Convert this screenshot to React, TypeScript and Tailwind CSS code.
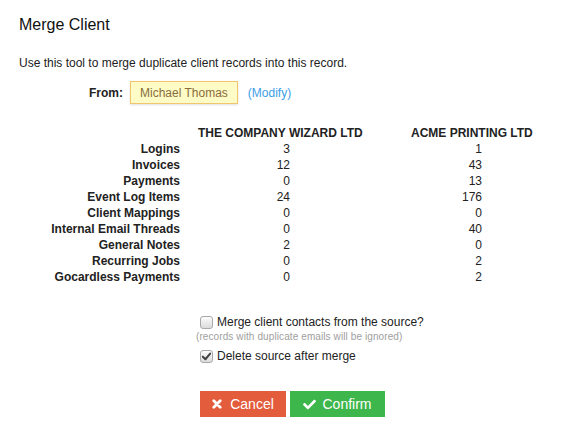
import React from "react";
import { FaCheck } from "react-icons/fa";

const rows: [string, string, string][] = [
  ["Logins", "3", "1"],
  ["Invoices", "12", "43"],
  ["Payments", "0", "13"],
  ["Event Log Items", "24", "176"],
  ["Client Mappings", "0", "0"],
  ["Internal Email Threads", "0", "40"],
  ["General Notes", "2", "0"],
  ["Recurring Jobs", "0", "2"],
  ["Gocardless Payments", "0", "2"],
];

function Box({ checked }: { checked?: boolean }) {
  return (
    <span className="relative inline-flex w-[13px] h-[13px] rounded-[3px] border border-[#a9a9a9] bg-gradient-to-b from-[#fcfcfc] to-[#dcdcdc] items-center justify-center shrink-0">
      {checked && (
        <svg width="11" height="11" viewBox="0 0 12 12">
          <path d="M2 6.2 L4.8 9 L10 2.8" fill="none" stroke="#444" strokeWidth="2.2" strokeLinecap="round" strokeLinejoin="round" />
        </svg>
      )}
    </span>
  );
}

export default function App() {
  return (
    <div className="w-[574px] h-[447px] bg-white text-[12px] text-[#222] font-['Liberation_Sans',Arial,sans-serif] overflow-hidden">
      <div className="pl-[19px] pt-[16px]">
        <div className="text-[16px] leading-[18px] text-[#111]">Merge Client</div>
        <div className="mt-[21px] leading-[16px]">Use this tool to merge duplicate client records into this record.</div>
      </div>
      <div className="flex items-center mt-[10px] pl-[89px]">
        <span className="font-bold text-[12px] mr-[7px]">From:</span>
        <span className="h-[23px] flex items-center px-[9px] bg-[#fdfcc6] border border-[#f2c66e] shadow-[0_1px_2px_rgba(0,0,0,0.12)] text-[#8a6d3b]">Michael Thomas</span>
        <span className="ml-[10px] text-[#3d9ee6]">(Modify)</span>
      </div>
      <div className="mt-[21px] grid grid-cols-[180px_213px_auto] gap-x-[18px] gap-y-0 leading-[16px]">
        <div className="col-start-1"></div>
        <div className="font-bold">THE COMPANY WIZARD LTD</div>
        <div className="font-bold -ml-[18px]">ACME PRINTING LTD</div>
        {rows.map(([label, a, b]) => (
          <React.Fragment key={label}>
            <div className="text-right font-bold">{label}</div>
            <div className="w-[92px] text-right">{a}</div>
            <div className="w-[71px] text-right -ml-[18px]">{b}</div>
          </React.Fragment>
        ))}
      </div>
      <div className="mt-[29px] pl-[200px] leading-[16px]">
        <div className="flex items-center gap-[4px] text-[12px]">
          <Box />
          <span>Merge client contacts from the source?</span>
        </div>
        <div className="-ml-[4px] mt-[1px] text-[10px] leading-[12px] text-[#a0a0a0] tracking-[0.1px]">(records with duplicate emails will be ignored)</div>
        <div className="flex items-center gap-[4px] mt-[5px]">
          <Box checked />
          <span>Delete source after merge</span>
        </div>
      </div>
      <div className="mt-[27px] pl-[200px] flex gap-[4px]">
        <button className="h-[26px] w-[86px] bg-[#e35c3b] text-white text-[14px] flex items-center justify-center gap-[8px]">
          <svg width="10" height="10" viewBox="0 0 10 10">
            <path d="M1.8 1.8 L8.2 8.2 M8.2 1.8 L1.8 8.2" stroke="white" strokeWidth="2.8" strokeLinecap="round" />
          </svg>
          <span>Cancel</span>
        </button>
        <button className="h-[26px] w-[95px] bg-[#3db64b] text-white text-[14px] flex items-center justify-center gap-[6px]">
          <FaCheck size={13} />
          <span>Confirm</span>
        </button>
      </div>
    </div>
  );
}
